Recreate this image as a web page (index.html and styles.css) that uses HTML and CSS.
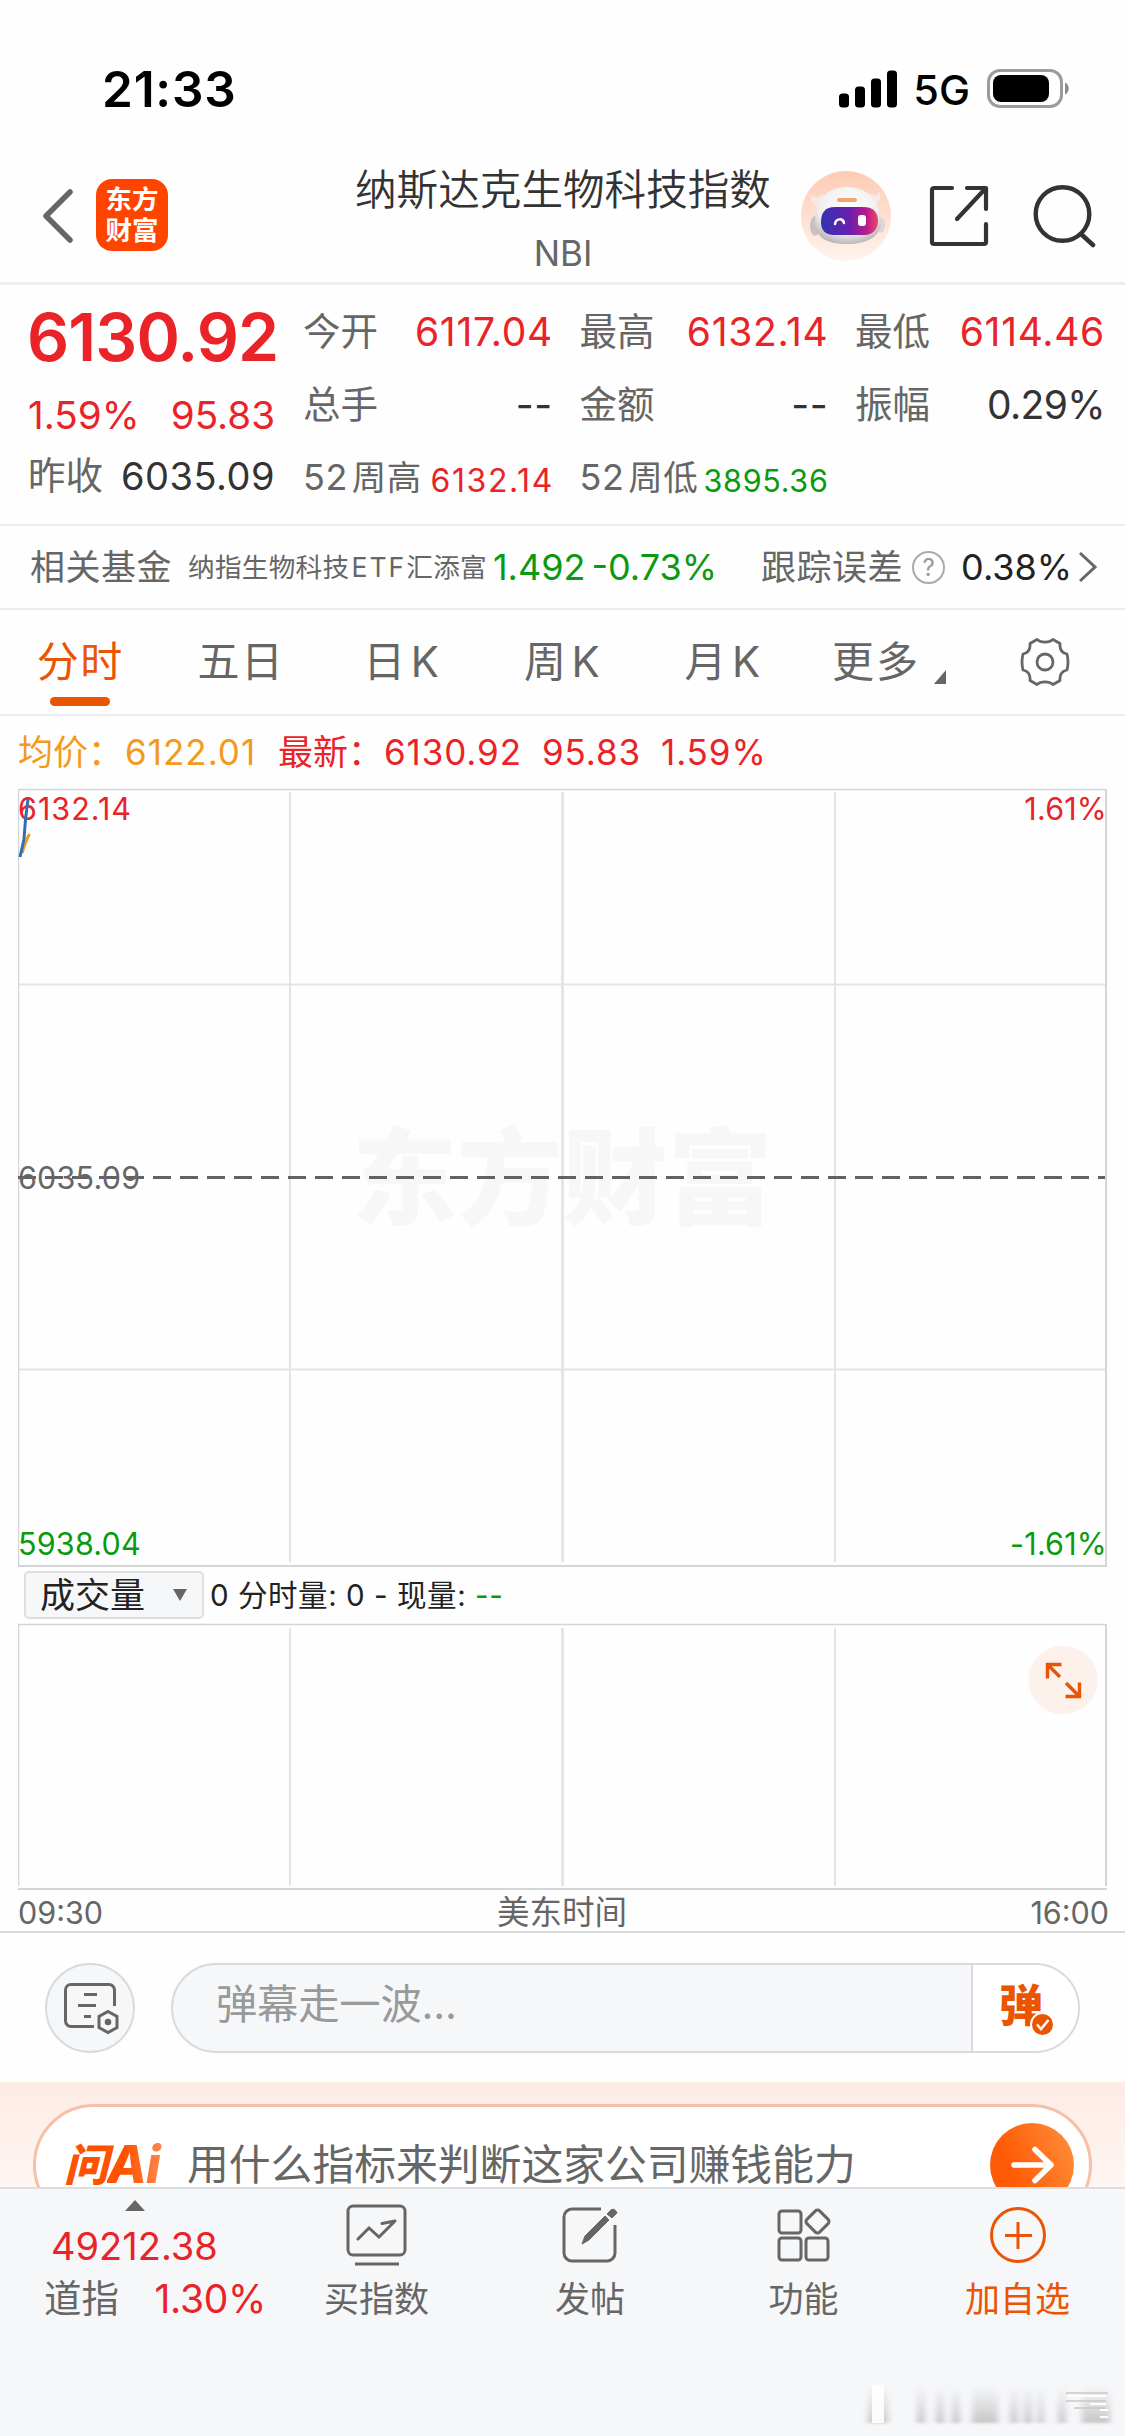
FILE: index.html
```html
<!DOCTYPE html>
<html lang="zh-CN">
<head>
<meta charset="utf-8">
<title>纳斯达克生物科技指数</title>
<link rel="stylesheet" href="styles.css">
</head>
<body>
<div class="screen">
  <div class="status">
    <span class="clock">21:33</span>
    <div class="status-right">
      <svg class="signal" width="58" height="38" viewBox="0 0 58 38"><rect x="0" y="23.500" width="10" height="14" rx="3.500"/><rect x="16" y="16.500" width="10" height="21" rx="3.500"/><rect x="32" y="8.500" width="10" height="29" rx="3.500"/><rect x="48" y="0.500" width="10" height="37" rx="3.500"/></svg>
      <span class="network">5G</span>
      <svg class="battery" width="83" height="40" viewBox="0 0 83 40"><rect x="1.500" y="1.500" width="73" height="36" rx="11.500" fill="none" stroke="#9b9b9b" stroke-width="3"/><rect x="6" y="6" width="56" height="27" rx="8" fill="#000"/><path d="M78 13.500c5 2 5 10 0 12z" fill="#8c8c8c"/></svg>
    </div>
  </div>

  <header class="header">
    <svg class="back" width="32" height="54" viewBox="0 0 32 54"><path d="M28 3 4 27 28 51" fill="none" stroke="#666" stroke-width="5.500" stroke-linecap="round" stroke-linejoin="round"/></svg>
    <div class="logo"><span>东方</span><span>财富</span></div>
    <div class="heading">
      <h1>纳斯达克生物科技指数</h1>
      <p>NBI</p>
    </div>
    <svg class="robot" width="90" height="90" viewBox="0 0 90 90">
      <defs>
        <linearGradient id="halo" x1="0" y1="0" x2="0" y2="1"><stop offset="0" stop-color="#fdcbb2"/><stop offset="1" stop-color="#fff4ee"/></linearGradient>
        <radialGradient id="shell" cx=".5" cy=".35" r=".65"><stop offset="0" stop-color="#fff"/><stop offset=".7" stop-color="#f1eef0"/><stop offset="1" stop-color="#bdb8bb"/></radialGradient>
        <linearGradient id="visor" x1="0" y1="0" x2="1" y2="0"><stop offset="0" stop-color="#3134b0"/><stop offset=".5" stop-color="#6a1fae"/><stop offset=".8" stop-color="#b81c8c"/><stop offset="1" stop-color="#ef4668"/></linearGradient>
      </defs>
      <circle cx="45" cy="45" r="45" fill="url(#halo)"/>
      <path d="M10 24c3 3 8 3 12-1l5 7-9 6c-6-1-9-7-8-12zM79 21c-3 4-7 4-12 1l-4 6 9 6c6-1 8-8 7-13z" fill="#f4e9e6"/>
      <ellipse cx="14" cy="55" rx="5" ry="10" fill="#c6c2c3"/><ellipse cx="80" cy="54" rx="4" ry="8" fill="#dfd7d7"/>
      <path d="M46 16c22 0 33 16 34 35 0 14-13 22-34 22S14 66 14 51c0-19 10-35 32-35z" fill="url(#shell)"/>
      <rect x="36" y="27" width="20" height="4" rx="2" fill="#efa66f"/>
      <path d="M34 36h28c11 0 15 6 15 14s-5 14-14 14H33c-9 0-13-5-13-13 0-9 4-15 14-15z" fill="url(#visor)"/>
      <path d="M34 53c1-6 8-6 9-1" fill="none" stroke="#fff" stroke-width="2.500" stroke-linecap="round"/>
      <rect x="57" y="44" width="8" height="11" rx="3" fill="#fff"/>
    </svg>
    <svg class="share" width="62" height="62" viewBox="0 0 62 62"><path d="M23 3H5a2 2 0 0 0-2 2v52a2 2 0 0 0 2 2h50a2 2 0 0 0 2-2V39M38 3h19v21M56 4 28 34" fill="none" stroke="#333" stroke-width="4.200" stroke-linecap="round" stroke-linejoin="round"/></svg>
    <svg class="search" width="64" height="64" viewBox="0 0 64 64"><circle cx="29.500" cy="30" r="26.800" fill="none" stroke="#333" stroke-width="4.400"/><path d="M48 50 60 61" stroke="#333" stroke-width="4.500" stroke-linecap="round"/></svg>
  </header>

  <section class="quote">
    <div class="main-quote">
      <div class="price red">6130.92</div>
      <div class="pair big red"><span>1.59%</span><span>95.83</span></div>
      <div class="pair"><span class="label">昨收</span><span class="prev">6035.09</span></div>
    </div>
    <div class="stats">
      <div class="stat"><span class="label">今开</span><b class="red">6117.04</b></div>
      <div class="stat"><span class="label">最高</span><b class="red">6132.14</b></div>
      <div class="stat"><span class="label">最低</span><b class="red">6114.46</b></div>
      <div class="stat"><span class="label">总手</span><b>--</b></div>
      <div class="stat"><span class="label">金额</span><b>--</b></div>
      <div class="stat"><span class="label">振幅</span><b class="swing">0.29%</b></div>
      <div class="stat week"><span class="label">52<i>周高</i></span><b class="red high">6132.14</b></div>
      <div class="stat week"><span class="label">52<i>周低</i></span><b class="green low">3895.36</b></div>
    </div>
  </section>

  <section class="fund">
    <span class="fund-title">相关基金</span>
    <span class="fund-name">纳指生物科技<i>ETF</i>汇添富</span>
    <span class="fund-num green">1.492</span>
    <span class="fund-num fund-change green">-0.73%</span>
    <span class="fund-title track">跟踪误差</span>
    <span class="help">?</span>
    <span class="fund-num error">0.38%</span>
    <svg class="more" width="20" height="32" viewBox="0 0 20 32"><path d="M2 2 17 16 2 30" fill="none" stroke="#666" stroke-width="3"/></svg>
  </section>

  <nav class="tabs">
    <span class="tab active">分时</span>
    <span class="tab">五日</span>
    <span class="tab">日<i>K</i></span>
    <span class="tab">周<i>K</i></span>
    <span class="tab">月<i>K</i></span>
    <span class="tab tab-more">更多<svg width="12" height="14" viewBox="0 0 12 14"><path d="M12 0v14H0z" fill="#666"/></svg></span>
    <span class="tab"><svg width="50" height="50" viewBox="-25 -25 50 50" fill="none" stroke="#666" stroke-width="2.800" stroke-linejoin="round"><circle r="8"/><path d="M-8-22.500C-4-19 4-19 8-22.500L15-18.500C14.500-13 17-9 22-8Q24 0 22 8C17 9 14.500 13 15 18.500L8 22.500C4 19-4 19-8 22.500L-15 18.500C-14.500 13-17 9-22 8Q-24 0-22-8C-17-9-14.500-13-15-18.500Z"/></svg></span>
  </nav>

  <div class="legend">
    <span class="avg">均价：</span><span class="avg avg-num">6122.01</span>
    <span class="latest">最新：</span><span class="latest-num">6130.92</span><span class="diff">95.83</span><span class="rate">1.59%</span>
  </div>

  <section class="chart">
    <span class="chart-mark">东方财富</span>
    <svg class="lines" width="1090" height="780" viewBox="18 788 1090 780">
      <path d="M290 792V1562M835 792V1562M19 984.500H1105M19 1369.500H1105" stroke="#e4e4e8" stroke-width="2"/>
      <path d="M562.500 792V1562" stroke="#e4e4ec" stroke-width="3"/>
      <path d="M18.500 1567V789.500H1106" fill="none" stroke="#d3d5d8" stroke-width="1.500"/>
      <path d="M1106 789V1566H18" fill="none" stroke="#d4d5d7" stroke-width="2"/>
      <path d="M18 1177.500H1105" stroke="#626265" stroke-width="3" stroke-dasharray="18 9"/>
    </svg>
    <div class="scale top red"><span class="peak">6132.14</span><span>1.61%</span></div>
    <div class="scale middle"><span>6035.09</span></div>
    <div class="scale green"><span>5938.04</span><span>-1.61%</span></div>
    <svg class="lines" width="1090" height="780" viewBox="18 788 1090 780" fill="none" stroke-width="3">
      <path d="M22 853Q26 840 29.500 834" stroke="#f39a1c"/>
      <path d="M20 857 24 839Q25 820 28 799" stroke="#2f6fb5"/>
    </svg>
  </section>

  <div class="volume-bar">
    <div class="select">成交量<svg width="14" height="12" viewBox="0 0 14 12"><path d="M0 0h14L7 12z" fill="#666"/></svg></div>
    <p>0 分时量: 0 - 现量: <em class="green">--</em></p>
  </div>

  <section class="volume">
    <svg class="volume-lines" width="1090" height="268" viewBox="18 1623 1090 268">
      <path d="M290 1628V1886M835 1628V1886" stroke="#e4e4e8" stroke-width="2"/>
      <path d="M562.500 1628V1886" stroke="#e4e4ec" stroke-width="3"/>
      <path d="M18.500 1886V1624.500H1106" fill="none" stroke="#d3d5d8" stroke-width="1.500"/>
      <path d="M1106 1624V1886M18 1889H1107" stroke="#d4d5d7" stroke-width="2"/>
    </svg>
    <svg class="expand" width="70" height="70" viewBox="0 0 70 70"><circle cx="35" cy="35" r="34.500" fill="#fdf1eb"/><path d="M33.500 19.500H19.500V33.500M20 20 32 32M37.500 51.500H51.500V37.500M51 51 38 38" fill="none" stroke="#ea5504" stroke-width="3.400"/></svg>
  </section>

  <div class="axis"><span>09:30</span><span class="zone">美东时间</span><span class="close">16:00</span></div>

  <div class="comment">
    <div class="round">
      <svg width="56" height="56" viewBox="0 0 56 56" fill="none" stroke="#666" stroke-width="3" stroke-linecap="round"><path d="M31 45.500H8a5.500 5.500 0 0 1-5.500-5.500V9A5.500 5.500 0 0 1 8 3.500H46A5.500 5.500 0 0 1 51.500 9V25M21 13.500H34M15 24.500H33M21 35.500H28" stroke-linecap="butt"/><path d="M45 30.500 54 35.500V46.500L45 51.500 36 46.500V35.500Z"/><circle cx="45" cy="41" r="1.800" fill="#666"/></svg>
    </div>
    <div class="input">
      <span class="placeholder">弹幕走一波...</span>
      <div class="barrage"><span>弹</span><svg width="25" height="25" viewBox="0 0 25 25"><circle cx="12.500" cy="12.500" r="11.500" fill="#ea5504" stroke="#fff" stroke-width="2"/><path d="M7 12.500 11 17 18.500 8" fill="none" stroke="#fff" stroke-width="2.500"/></svg></div>
    </div>
  </div>

  <section class="banner">
    <div class="pill">
      <span class="ask"><span class="ask-cn">问</span><span class="ask-ai">Ai</span></span>
      <span class="question">用什么指标来判断这家公司赚钱能力</span>
      <svg class="go" width="84" height="84" viewBox="0 0 84 84"><defs><linearGradient id="go" x1="0" y1=".6" x2="1" y2=".2"><stop offset=".2" stop-color="#ff5a05"/><stop offset="1" stop-color="#ff8c38"/></linearGradient></defs><circle cx="42" cy="42" r="42" fill="url(#go)"/><path d="M24 42H61M45 26.500 61 42 45 57.500" fill="none" stroke="#fff" stroke-width="5.500" stroke-linecap="round" stroke-linejoin="round"/></svg>
    </div>
  </section>

  <footer class="bottom">
    <div class="dow">
      <svg width="20" height="11" viewBox="0 0 20 11"><path d="M10 0 20 11H0z" fill="#666"/></svg>
      <span class="dow-price red">49212.38</span>
      <div class="dow-row"><span>道指</span><span class="dow-rate red">1.30%</span></div>
    </div>
    <div class="action">
      <svg width="62" height="62" viewBox="0 0 62 62" fill="none" stroke="#666" stroke-width="3"><rect x="2" y="2" width="57" height="49" rx="5"/><path d="M12 35 23 24 33 33 48 18M36 19.500 49 17" stroke-linecap="round"/><path d="M9 60H53"/></svg>
      <span>买指数</span>
    </div>
    <div class="action">
      <svg width="62" height="62" viewBox="0 0 62 62"><path d="M42 5H13a8 8 0 0 0-8 8V49a8 8 0 0 0 8 8H48a8 8 0 0 0 8-8V21" fill="none" stroke="#666" stroke-width="3"/><path d="M23 40 26 32 46 12 50 16 30 36ZM48 10 52 6Q54 4 56.500 6.500T57 10L53 14Z" fill="#666" stroke="#666"/></svg>
      <span>发帖</span>
    </div>
    <div class="action">
      <svg width="62" height="62" viewBox="0 0 62 62" fill="none" stroke="#666" stroke-width="3"><rect x="6" y="7" width="22" height="22" rx="3"/><rect x="6" y="34" width="22" height="22" rx="3"/><rect x="33" y="34" width="22" height="22" rx="3"/><rect x="35.500" y="8.500" width="18" height="18" rx="3" transform="rotate(45 44.500 17.500)"/></svg>
      <span>功能</span>
    </div>
    <div class="action add">
      <svg width="62" height="62" viewBox="0 0 62 62" fill="none" stroke="#ea5504" stroke-width="3"><circle cx="31" cy="31" r="26.500"/><path d="M31 18V45M18 31.500H45"/></svg>
      <span>加自选</span>
    </div>
    <svg class="smear" width="260" height="52" viewBox="0 0 260 52">
      <defs><filter id="soft" x="-10%" y="-10%" width="120%" height="120%"><feGaussianBlur stdDeviation="3 1.500"/></filter><linearGradient id="fade" x1="0" y1="0" x2="0" y2="1"><stop offset="0" stop-color="#bbb" stop-opacity="0"/><stop offset="1" stop-color="#aaa" stop-opacity=".65"/></linearGradient></defs>
      <g fill="url(#fade)" filter="url(#soft)"><path d="M8 6h20v38H8zM57 6h8v38h-8zM76 6h8v38h-8zM92 6h8v38h-8zM112 6h26v38h-26zM150 6h8v38h-8zM164 6h8v38h-8zM178 6h6v38h-6zM198 6h8v38h-8zM222 6h28v38h-28z"/></g>
      <path d="M12 6h12v38H12z" fill="#fff" fill-opacity=".9"/>
      <path d="M206 14h42M206 22h40M214 29h32" stroke="#c8c8c8" stroke-width="1.500"/>
      <path d="M208 17h38M230 25h16M240 31h8M240 38h8" stroke="#fff" stroke-width="2"/>
    </svg>
  </footer>
</div>
</body>
</html>
```
FILE: styles.css
```css
* { box-sizing: border-box; margin: 0; padding: 0; }
body {
  width: 1125px;
  background: #fefefe;
  font-family: Inter, "Noto Sans CJK SC", sans-serif;
  color: #333;
}
i, em { font-style: normal; }
b { font-weight: 400; }
svg { display: block; flex: none; }
span { white-space: nowrap; }
.screen { height: 2436px; overflow: hidden; display: flex; flex-direction: column; }
.screen > * { flex: none; }
.red { color: #ea2328; }
.green { color: #0a9a10; }

.status { height: 150px; padding: 59px 55px 0 102px; display: flex; justify-content: space-between; align-items: flex-start; color: #000; }
.clock { font-size: 49.5px; line-height: 60px; font-weight: 600; letter-spacing: 0.8px; }
.status-right { display: flex; align-items: center; height: 60px; }
.network { font-size: 41.5px; line-height: 60px; font-weight: 500; margin: 2px 17px 0 16px; }

.header { height: 135px; border-bottom: 3px solid #eee; display: flex; align-items: flex-start; padding-left: 42px; }
.back { margin-top: 39px; }
.logo { width: 72px; height: 72px; margin: 29px 0 0 22px; padding-top: 5px; border-radius: 16px; background: #ff4400; color: #fff; display: flex; flex-direction: column; align-items: center; font-size: 26.5px; line-height: 31px; font-weight: 700; }
.heading { width: 418px; margin: 10px 0 0 186px; text-align: center; }
.heading h1 { font-size: 41.6px; line-height: 61px; font-weight: 350; white-space: nowrap; }
.heading p { font-size: 35px; line-height: 48px; padding-top: 8px; height: 56px; color: #666; }
.robot { margin: 21px 0 0 29px; }
.share { margin: 35px 0 0 38px; }
.search { margin: 34px 0 0 42px; }

.quote { height: 241px; border-bottom: 2px solid #ececec; display: flex; padding-left: 28px; }
.main-quote { width: 247px; }
.price { font-size: 66px; line-height: 80px; font-weight: 600; margin-top: 12px; letter-spacing: -0.9px; margin-left: -1px; }
.pair { display: flex; justify-content: space-between; font-size: 38px; line-height: 50px; margin-top: 11px; }
.pair.big { font-size: 38.6px; margin-top: 13px; }
.prev { letter-spacing: 0.5px; }
.label { color: #666; font-size: 37.5px; }
.stats { margin-left: 28px; display: grid; grid-template-columns: 249px 248px 249px; grid-template-rows: 48px 48px 48px; column-gap: 27.5px; row-gap: 24.5px; padding-top: 23px; }
.stat { display: flex; justify-content: space-between; font-size: 39px; line-height: 48px; letter-spacing: 0.7px; }
.stat b { margin-right: -1px; }
.stat .label { letter-spacing: 0; }
.stat .swing { letter-spacing: -0.6px; }
.stat.week .label { font-size: 36px; letter-spacing: 0.5px; }
.week i { font-size: 34.5px; margin-left: 4px; }
.stat .high { font-size: 32px; padding-top: 4px; letter-spacing: 1.6px; margin-right: -2px; }
.stat .low { font-size: 30.5px; padding-top: 4px; letter-spacing: 0.7px; }

.fund { height: 84px; border-bottom: 2px solid #ececec; display: flex; align-items: center; padding-left: 30px; line-height: 48px; }
.fund-title { font-size: 35px; letter-spacing: 0.5px; color: #666; }
.fund-name { font-size: 26.6px; color: #666; margin-left: 16px; letter-spacing: 0.3px; }
.fund-name i { letter-spacing: 2px; margin-left: 2px; }
.fund-num { font-size: 36px; margin-left: 6px; }
.fund-change { margin-left: 6px; }
.track { margin-left: 44px; }
.help { width: 33px; height: 33px; margin-left: 9px; border: 2px solid #aaa; border-radius: 50%; font-size: 24px; line-height: 29px; text-align: center; color: #999; }
.error { margin-left: 16px; color: #222; }
.more { margin-left: 6px; }

.tabs { height: 106px; border-bottom: 2px solid #ececec; display: grid; grid-template-columns: repeat(7, 1fr); padding-top: 22px; }
.tab { display: flex; justify-content: center; align-items: center; height: 60px; font-size: 42px; line-height: 60px; letter-spacing: 1.5px; color: #666; }
.tab i { margin-left: 4px; }
.active { color: #ea5504; position: relative; }
.active::after { content: ""; position: absolute; left: 50px; top: 65px; width: 60px; height: 9px; border-radius: 5px; background: #ea5504; }
.tab-more { align-items: center; padding-left: 10px; letter-spacing: 2px; }
.tab-more svg { margin: 29px 0 0 14px; }

.legend { height: 72px; display: flex; padding: 12px 0 0 18px; font-size: 35px; line-height: 48px; letter-spacing: 0.9px; color: #ea2328; }
.avg, .latest { letter-spacing: 0; }
.avg { color: #f39a1c; width: 107px; }
.avg-num { width: 153px; letter-spacing: 1px; }
.latest { width: 106px; }
.latest-num { width: 158px; }
.diff { width: 119px; }

.chart { height: 780px; margin: 0 18px; position: relative; display: flex; flex-direction: column; justify-content: space-between; padding: 3px 0 6px 0; font-size: 30.5px; line-height: 36px; letter-spacing: 0.2px; }
.lines { position: absolute; left: 0; top: 0; }
.scale { display: flex; justify-content: space-between; position: relative; }
.peak { letter-spacing: 1px; }
.middle { color: #666; margin-top: 2px; }
.chart-mark { position: absolute; left: 0; right: 0; top: 330px; text-align: center; font-size: 105px; line-height: 120px; font-weight: 900; color: #f7f7f7; }

.volume-bar { height: 55px; display: flex; align-items: flex-start; padding: 3px 0 0 24px; }
.select { width: 180px; height: 48px; border: 2px solid #dddfe2; border-radius: 5px; background: #f6f7f9; padding: 0 15px 0 14px; display: flex; justify-content: space-between; align-items: center; font-size: 35px; line-height: 40px; color: #222; }
.volume-bar p { font-size: 29.5px; line-height: 48px; margin-left: 6px; letter-spacing: 0.55px; color: #222; }

.volume { height: 268px; margin: 0 17px 0 18px; position: relative; }
.expand { position: absolute; left: 1010px; top: 22px; }

.axis { height: 42px; border-bottom: 2px solid #d8d8da; display: grid; grid-template-columns: 1fr 1fr 1fr; padding: 2px 16px 0 18px; font-size: 30.5px; line-height: 40px; color: #666; }
.zone { text-align: center; font-size: 32.5px; padding-right: 3px; }
.close { text-align: right; }

.comment { height: 149px; padding: 30px 45px 0; display: flex; justify-content: space-between; }
.round { width: 90px; height: 90px; border: 2px solid #d8dade; border-radius: 50%; background: #f6f7f9; display: flex; align-items: center; justify-content: center; padding: 2px 0 0 1px; }
.input { width: 909px; height: 90px; border: 2px solid #d8dade; border-radius: 45px; background: #f6f7f9; overflow: hidden; display: flex; justify-content: space-between; }
.placeholder { font-size: 41.3px; line-height: 79px; padding-left: 43px; color: #999; letter-spacing: -0.2px; }
.barrage { width: 107px; border-left: 2px solid #d8dade; background: #fff; display: flex; padding-left: 26px; color: #ea5504; font-size: 44px; line-height: 83px; font-weight: 900; }
.barrage svg { margin: 47px 0 0 -13px; }

.banner { height: 105px; overflow: hidden; background: linear-gradient(#fdebe4, #fef6f2); padding: 22px 33px 0; }
.pill { height: 122px; border: 3px solid #f8bfa8; border-radius: 61px; background: #fff; display: flex; align-items: center; padding: 0 15px 0 28px; }
.ask { width: 98px; display: flex; align-items: center; font-size: 52px; line-height: 44px; font-weight: 800; font-style: italic; letter-spacing: -1px; color: #ff5200; }
.ask-cn { font-size: 44px; font-weight: 900; }
.ask-ai { padding-right: 4px; background: linear-gradient(90deg, #ff5200 30%, #ff8a50); -webkit-background-clip: text; background-clip: text; color: transparent; }
.question { font-size: 41.8px; line-height: 44px; margin: 0 0 0 25px; color: #666; flex: 1; }

.bottom { height: 249px; border-top: 2px solid #dcdde0; background: #f6f7f9; position: relative; display: grid; grid-template-columns: 270px 213px 214px 213px 215px; color: #666; }
.dow { padding: 11px 0 0 44px; display: flex; flex-direction: column; }
.dow svg { margin-left: 81px; }
.dow-price { font-size: 38px; line-height: 48px; margin: 11px 0 0 7px; }
.dow-row { display: flex; justify-content: space-between; width: 222px; font-size: 37.5px; line-height: 48px; margin-top: 5px; }
.dow-rate { font-size: 39px; letter-spacing: -0.3px; }
.action { display: flex; flex-direction: column; align-items: center; padding-top: 15px; font-size: 35px; line-height: 46px; }
.action svg { margin-bottom: 10px; }
.add { color: #ea5504; }
.smear { position: absolute; left: 860px; top: 190px; }
```
